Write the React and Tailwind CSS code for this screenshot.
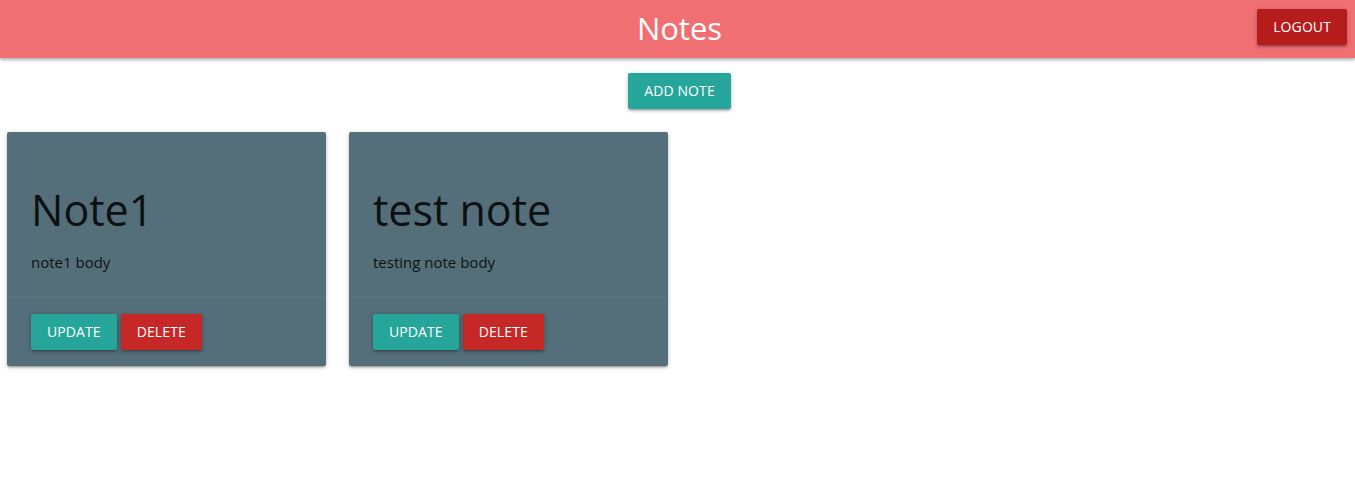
import React from "react";

const notes = [
  { id: 1, title: "Note1", body: "note1 body" },
  { id: 2, title: "test note", body: "testing note body" },
];

const btnShadow =
  "shadow-[0_2px_2px_0_rgba(0,0,0,0.14),0_3px_1px_-2px_rgba(0,0,0,0.12),0_1px_5px_0_rgba(0,0,0,0.2)]";

const Button = ({ children, color }) => (
  <button
    className={`h-9 px-4 rounded-[2px] text-white text-[14px] tracking-[0.1px] uppercase leading-9 ${color} ${btnShadow}`}
  >
    {children}
  </button>
);

const NoteCard = ({ note }) => (
  <div
    className={`w-[319px] bg-[#546e7a] rounded-[2px] ${btnShadow}`}
  >
    {/* contenido */}
    <div className="px-6 pt-6 pb-6">
      <h3 className="mt-[29px] mb-[17px] text-[43px] leading-[1.15] text-black/[0.87]">
        {note.title}
      </h3>
      <p className="text-[15px] leading-[22px] text-black/[0.85]">{note.body}</p>
    </div>
    {/* acciones */}
    <div className="border-t border-[#5f7884] px-6 py-4 flex gap-1">
      <Button color="bg-[#26a69a]">Update</Button>
      <Button color="bg-[#c62828]">Delete</Button>
    </div>
  </div>
);

export default function App() {
  return (
    <div
      className="min-h-[502px] bg-white"
      style={{ fontFamily: '"Open Sans", "Noto Sans", sans-serif' }}
    >
      <nav className="relative h-[58px] bg-[#f06f73] flex items-center justify-center shadow-[0_2px_3px_0_rgba(0,0,0,0.3)]">
        <span className="text-white text-[31px] leading-none -mt-[2px] pl-1">Notes</span>
        <div className="absolute right-2 top-[9px]">
          <Button color="bg-[#b71c1c]">Logout</Button>
        </div>
      </nav>

      <div className="flex justify-center pt-[15px] pl-1">
        <Button color="bg-[#26a69a]">Add note</Button>
      </div>

      <div className="flex gap-[23px] px-[7px] mt-[23px]">
        {notes.map((n) => (
          <NoteCard key={n.id} note={n} />
        ))}
      </div>
    </div>
  );
}
